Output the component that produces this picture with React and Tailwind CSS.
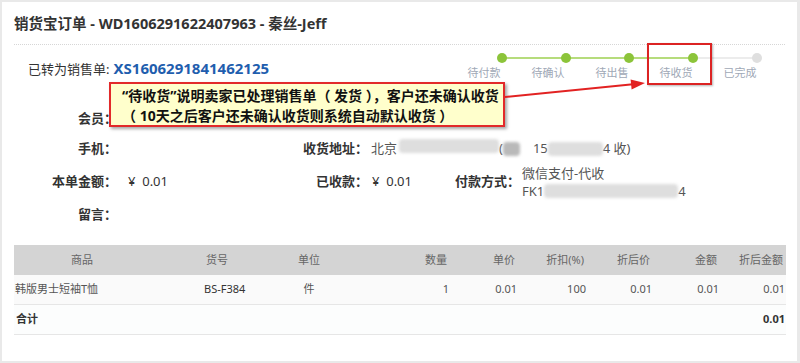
import React from 'react';

const STEPS = ['待付款', '待确认', '待出售', '待收货', '已完成'];

const COLS = [
  { head: '商品', align: 'center' },
  { head: '货号', align: 'center' },
  { head: '单位', align: 'center' },
  { head: '数量', align: 'right' },
  { head: '单价', align: 'right' },
  { head: '折扣(%)', align: 'right' },
  { head: '折后价', align: 'right' },
  { head: '金额', align: 'right' },
  { head: '折后金额', align: 'right' },
];

const ROW = ['韩版男士短袖T恤', 'BS-F384', '件', '1', '0.01', '100', '0.01', '0.01', '0.01'];

const gridCols = 'grid grid-cols-[136px_134px_50px_116px_68px_69px_66px_67px_66px]';

const Blur = ({ w, dark }) => (
  <span
    className={`inline-block h-[14px] rounded-sm blur-[1.5px] ${dark ? 'bg-[#b9b9b9]' : 'bg-[#dedede]'}`}
    style={{ width: w }}
  />
);

const Progress = () => {
  const xs = [50, 114, 177, 241, 305];
  return (
    <div className="w-[320px] mt-[7px] mr-[25px]">
      <svg width="320" height="12" viewBox="0 0 320 12">
        <line x1={xs[0]} y1="6" x2={xs[3]} y2="6" stroke="#b6dc7c" strokeWidth="2" />
        <line x1={xs[3]} y1="6" x2={xs[4]} y2="6" stroke="#ececec" strokeWidth="2" />
        {xs.map((x, i) => (
          <circle key={x} cx={x} cy="6" r="5" fill={i < 4 ? '#8cc43a' : '#dfdfdf'} />
        ))}
      </svg>
      <div className="flex mt-[1px]">
        {STEPS.map((s) => (
          <div key={s} className="w-[64px] text-center text-[11px] leading-[16px] text-[#a0a8b6]">
            {s}
          </div>
        ))}
      </div>
    </div>
  );
};

export default function App() {
  return (
    <div
      className="w-[800px] h-[363px] bg-[#e9e9e9] pt-[2px] pl-[2px] pr-[3px] pb-[2px]"
      style={{ fontFamily: '"Noto Sans", "Noto Sans CJK SC", sans-serif' }}
    >
      <div className="relative h-full bg-white pt-[10px]">
        {/* Title */}
        <div className="px-[12px] h-[22px] leading-[22px] text-[14.5px] font-bold text-[#333]">
          销货宝订单 - WD1606291622407963 - 秦丝-Jeff
        </div>
        <div className="mx-[12px] mt-[10px] border-t border-dotted border-[#d6d6d6]" />

        {/* Converted + progress */}
        <div className="flex h-[59px]">
          <div className="pl-[26px] mt-[12px] h-[22px] flex items-baseline">
            <span className="text-[13px] text-[#333]">已转为销售单:</span>
            <span className="ml-[4px] text-[15px] font-bold text-[#1f5eae]">XS1606291841462125</span>
          </div>
          <div className="ml-auto">
            <Progress />
          </div>
        </div>

        {/* Info rows */}
        <div className="text-[13px] text-[#333]">
          <div className="flex items-center h-[30px]">
            <div className="w-[115px] text-right font-bold">会员：</div>
          </div>
          <div className="flex items-center h-[30px]">
            <div className="w-[115px] text-right font-bold">手机：</div>
            <div className="ml-[11px] w-[124px]" />
            <div className="w-[116px] text-right font-bold">收货地址：</div>
            <div className="ml-[3px] flex items-center text-[#555]">
              <span>北京</span>
              <span className="ml-[2px]"><Blur w={100} /></span>
              <span>(</span>
              <Blur w={17} dark />
              <span className="ml-[13px]">15</span>
              <Blur w={55} />
              <span>4 收)</span>
            </div>
          </div>
          <div className="flex items-center h-[36px]">
            <div className="w-[115px] text-right font-bold">本单金额：</div>
            <div className="ml-[11px] w-[124px]">¥&nbsp; 0.01</div>
            <div className="w-[116px] text-right font-bold">已收款：</div>
            <div className="ml-[4px] w-[70px]">¥&nbsp; 0.01</div>
            <div className="w-[78px] text-right font-bold">付款方式：</div>
            <div className="ml-[2px] leading-[18px] text-[#555]">
              <div>微信支付-代收</div>
              <div className="flex items-center">
                <span>FK1</span>
                <Blur w={134} />
                <span>4</span>
              </div>
            </div>
          </div>
          <div className="flex items-center h-[30px]">
            <div className="w-[115px] text-right font-bold">留言：</div>
          </div>
        </div>

        {/* Table */}
        <div className="mx-[12px] mt-[15px] w-[772px] text-[11px]">
          <div className={`${gridCols} h-[30px] items-center bg-[#d4d4d4] text-[#666]`}>
            {COLS.map((c) => (
              <div key={c.head} className={c.align === 'right' ? 'text-right pr-[3px]' : 'text-center'}>
                {c.head}
              </div>
            ))}
          </div>
          <div className={`${gridCols} h-[30px] items-center bg-[#fafafa] border-b border-[#e6e6e6] text-[#555]`}>
            <div className="pl-[1px]">{ROW[0]}</div>
            <div className="pl-[54px] text-[#333]">{ROW[1]}</div>
            <div className="text-center">{ROW[2]}</div>
            {ROW.slice(3).map((v, i) => (
              <div key={i} className="text-right pr-[1px]">{v}</div>
            ))}
          </div>
          <div className={`${gridCols} h-[30px] items-center bg-[#fcfdfd] border-b border-[#e6e6e6] text-[#333] font-bold`}>
            <div className="pl-[2px]">合计</div>
            <div className="col-start-9 text-right pr-[1px]">0.01</div>
          </div>
        </div>

        {/* Annotation: red box around step */}
        <div className="absolute left-[645px] top-[41px] w-[65px] h-[42px] border-2 border-[#dc2323] shadow-[1px_1px_2px_rgba(0,0,0,0.3)]" />

        {/* Annotation: callout */}
        <div className="absolute left-[107px] top-[80px] w-[396px] h-[45px] bg-[#ffffcc] border-2 border-[#e22a2a] shadow-[2px_2px_3px_rgba(0,0,0,0.35)] pl-[11px] pt-[2px] text-[14px] leading-[20px] font-bold text-[#111] whitespace-pre">
          <div>“待收货”说明卖家已处理销售单（ 发货 ），客户还未确认收货</div>
          <div>（ 10天之后客户还未确认收货则系统自动默认收货 ）</div>
        </div>

        {/* Annotation: arrow */}
        <svg className="absolute left-0 top-0 pointer-events-none" width="795" height="359">
          <line x1="503" y1="95" x2="631" y2="82.3" stroke="#e22222" strokeWidth="2" />
          <polygon points="643,81 629.6,87.4 628.6,77.4" fill="#e22222" />
        </svg>
      </div>
    </div>
  );
}
